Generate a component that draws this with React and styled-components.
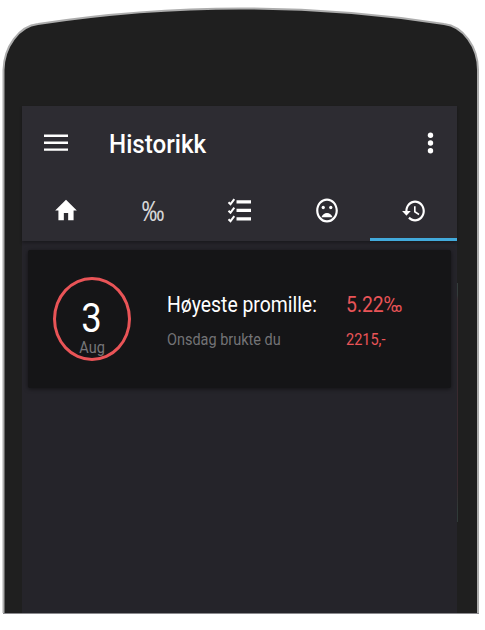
import React from "react";
import styled, { createGlobalStyle } from "styled-components";

const GlobalStyle = createGlobalStyle`
  * { box-sizing: border-box; }
  body { margin: 0; background: #fff; font-family: Roboto, sans-serif; }
`;

const Phone = styled.main`
  position: relative;
  width: 485px;
  height: 630px;
  padding: 106px 28px 17px 22px;
  overflow: hidden;
`;

const Shell = styled.svg`
  position: absolute;
  inset: 0;
  width: 485px;
  height: 630px;
`;

const Screen = styled.div`
  position: relative;
  width: 435px;
  height: 507px;
  background: #25242a;
`;

const Header = styled.header`
  height: 135px;
  background: #2d2c32;
  box-shadow: 0 2px 3px rgba(0, 0, 0, 0.3);
`;

const Toolbar = styled.div`
  display: flex;
  align-items: center;
  height: 74px;
  padding: 0 20px 0 22px;
`;

const IconButton = styled.button`
  display: flex;
  padding: 0;
  border: 0;
  background: none;
  color: #fff;
`;

const Text = styled.span`
  display: block;
  width: max-content;
  white-space: nowrap;
  font-size: ${(p) => p.$size}px;
  font-weight: ${(p) => p.$weight || 400};
  line-height: ${(p) => p.$line}px;
  color: ${(p) => p.$color || "#fff"};
  transform: scaleX(${(p) => p.$stretch || 0.905});
  transform-origin: ${(p) => p.$origin || "left"} center;
`;

const Title = styled.h1`
  flex: 1;
  margin: 2px 0 0 41px;
`;

const Tabs = styled.nav`
  display: grid;
  grid-template-columns: repeat(5, 1fr);
  height: 61px;
`;

const Tab = styled.button`
  display: flex;
  align-items: center;
  justify-content: center;
  padding: 0;
  border: 0;
  background: none;
  box-shadow: inset 0 -3px ${(p) => (p.$active ? "#42aadb" : "transparent")};
  color: #fff;
`;

const Icon = styled.svg`
  display: block;
  width: ${(p) => p.$w}px;
  height: ${(p) => p.$h}px;
  fill: currentColor;
`;

const Card = styled.article`
  display: grid;
  grid-template-columns: 139px 179px 1fr;
  height: 138px;
  margin: 9px 6px 0;
  border-radius: 2px;
  background: #151517;
  box-shadow: 0 1px 4px rgba(0, 0, 0, 0.5);
`;

const DateRing = styled.div`
  display: flex;
  flex-direction: column;
  align-items: center;
  width: 78px;
  height: 84px;
  margin: 27px 0 0 25px;
  padding-top: 17px;
  border: 3px solid #e95457;
  border-radius: 50%;
`;

const Column = styled.div`
  display: flex;
  flex-direction: column;
  gap: 9px;
  padding-top: 41px;
`;

const Scroll = styled.i`
  position: absolute;
  left: 435px;
  top: 177px;
  width: 1px;
  height: 239px;
  background: linear-gradient(#343c3b 0 5%, #3a2a2f 7% 85%, #303a38 95%);
`;

function Glyph({ w = 26, h = 28, box = "0 0 24 24", children }) {
  return (
    <Icon $w={w} $h={h} viewBox={box} preserveAspectRatio="none" aria-hidden="true">
      {children}
    </Icon>
  );
}

const outline =
  "M3.5 613V70C4 47 19 26 38 24Q140 8.500 241 8.500T444 24C463 26 478 47 478 70V613";

export default function App() {
  return (
    <>
      <GlobalStyle />
      <Phone>
        <Shell viewBox="0 0 485 630" aria-hidden="true">
          <path d={outline} fill="#1f1f1f" stroke="#adadad" strokeWidth="2" />
          <path d="M3 613.500H479" stroke="#8a898d" />
        </Shell>
        <Screen>
          <Header>
            <Toolbar>
              <IconButton aria-label="Meny">
                <Glyph w={24} h={18} box="0 0 24 18">
                  <path d="M0 .5h24v2.400H0zM0 7.500h24v2.400H0zM0 14.400h24v2.400H0z" />
                </Glyph>
              </IconButton>
              <Title><Text $size={26} $line={30} $weight={500} $stretch={0.93}>Historikk</Text></Title>
              <IconButton aria-label="Mer">
                <Glyph w={13} h={24} box="0 0 13 24">
                  <circle cx="6.500" cy="4.200" r="2.700" />
                  <circle cx="6.500" cy="12" r="2.700" />
                  <circle cx="6.500" cy="19.700" r="2.700" />
                </Glyph>
              </IconButton>
            </Toolbar>
            <Tabs>
              <Tab aria-label="Hjem">
                <Glyph h={29}><path d="M10 20v-6h4v6h5v-8h3L12 3 2 12h3v8z" /></Glyph>
              </Tab>
              <Tab>
                <Text $size={30} $line={28} $weight={500} $stretch={0.75} $color="#d6d6d6" $origin="center">‰</Text>
              </Tab>
              <Tab aria-label="Liste">
                <Glyph box="0 0 26 28">
                  <path d="M9.500 3.300h14.500v3.200H9.500zM9.500 11.800h14.500v3.200H9.500zM9.500 20.200h14.500v3.200H9.500z" />
                  <path d="M1.500 5.200l2 2 3.800-5M1.500 13.700l2 2 3.800-5M1.500 22.200l2 2 3.800-5" fill="none" stroke="currentColor" strokeWidth="2" />
                </Glyph>
              </Tab>
              <Tab aria-label="Humør">
                <Glyph h={29}>
                  <path d="M11.990 2C6.470 2 2 6.480 2 12s4.470 10 9.990 10C17.520 22 22 17.520 22 12S17.520 2 11.990 2zM12 20c-4.420 0-8-3.580-8-8s3.580-8 8-8 8 3.580 8 8-3.580 8-8 8z" />
                  <circle cx="8.500" cy="9.500" r="1.500" />
                  <circle cx="15.500" cy="9.500" r="1.500" />
                  <path d="M12 14c-2.330 0-4.320 1.450-5.120 3.500h10.240c-.8-2.050-2.790-3.500-5.120-3.500z" />
                </Glyph>
              </Tab>
              <Tab $active aria-label="Historikk">
                <Glyph>
                  <path d="M13 3c-4.970 0-9 4.030-9 9H1l3.890 3.890.07.14L9 12H6c0-3.870 3.130-7 7-7s7 3.130 7 7-3.130 7-7 7c-1.930 0-3.680-.79-4.940-2.060l-1.420 1.420C8.270 19.990 10.510 21 13 21c4.970 0 9-4.030 9-9s-4.030-9-9-9zm-1 5v5l4.280 2.540.72-1.210-3.500-2.080V8H12z" />
                </Glyph>
              </Tab>
            </Tabs>
          </Header>
          <Card>
            <DateRing>
              <Text $size={41} $line={42} $stretch={0.89} $origin="center">3</Text>
              <Text $size={16} $line={17} $color="#77777a" $origin="center">Aug</Text>
            </DateRing>
            <Column>
              <Text $size={22} $line={28} $stretch={0.88}>Høyeste promille:</Text>
              <Text $size={16} $line={24} $color="#737376">Onsdag brukte du</Text>
            </Column>
            <Column>
              <Text $size={22} $line={28} $stretch={0.88} $color="#e95457">5.22‰</Text>
              <Text $size={16} $line={24} $color="#e95457">2215,-</Text>
            </Column>
          </Card>
          <Scroll />
        </Screen>
      </Phone>
    </>
  );
}
